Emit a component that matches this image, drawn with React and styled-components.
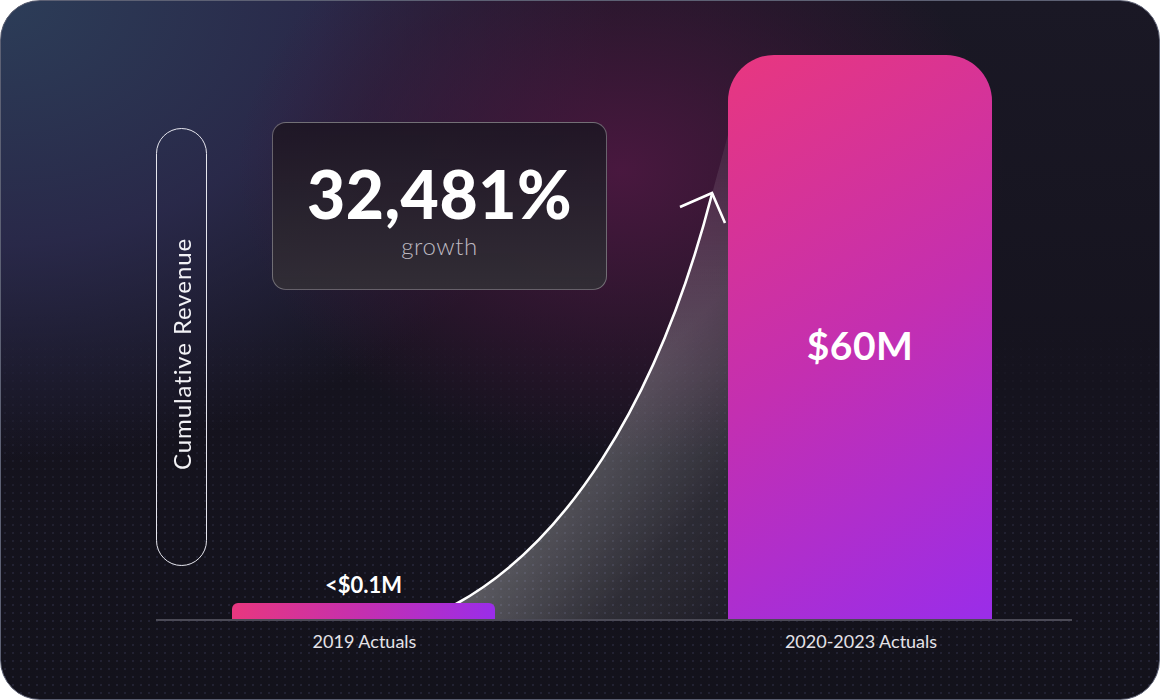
import React from "react";
import styled, { createGlobalStyle } from "styled-components";

const GlobalStyle = createGlobalStyle`
  html, body {
    margin: 0;
    padding: 0;
    background: #ffffff;
  }
  body {
    font-family: "Lato", "Noto Sans", sans-serif;
  }
`;

const Card = styled.div`
  position: relative;
  width: 1160px;
  height: 700px;
  box-sizing: border-box;
  border-radius: 40px;
  border: 1.5px solid #5d6174;
  overflow: hidden;
  padding: 54px 88px 0 155px;
  display: flex;
  flex-direction: column;
  background:
    radial-gradient(ellipse 480px 360px at 620px 170px, rgba(78, 24, 66, 0.9), rgba(60, 22, 55, 0.4) 55%, transparent 80%),
    radial-gradient(ellipse 720px 540px at 0px 0px, #2c3d58 0%, rgba(46, 46, 84, 0.78) 45%, transparent 85%),
    linear-gradient(180deg, #1a1825 0%, #15131e 55%, #13121b 100%);

  &::before {
    content: "";
    position: absolute;
    inset: 0;
    background-image: radial-gradient(circle, rgba(110, 115, 165, 0.17) 0.9px, transparent 1.5px);
    background-size: 8px 8px;
    -webkit-mask-image: linear-gradient(180deg, transparent 45%, #000 80%);
    mask-image: linear-gradient(180deg, transparent 45%, #000 80%);
    pointer-events: none;
  }
`;

const Overlay = styled.svg`
  position: absolute;
  top: 0;
  left: 0;
  pointer-events: none;
  z-index: 0;
`;

const Plot = styled.div`
  position: relative;
  z-index: 1;
  display: flex;
  height: 564px;
  border-bottom: 2px solid #4b4a56;
  width: 916px;
`;

const AxisPill = styled.div`
  align-self: flex-start;
  margin-top: 73px;
  width: 51px;
  height: 438px;
  box-sizing: border-box;
  border: 1.5px solid #e6e6ee;
  border-radius: 26px;
  display: flex;
  align-items: center;
  justify-content: center;
  writing-mode: vertical-rl;
  transform: rotate(180deg);
  color: #f2f2f6;
  font-size: 24px;
  letter-spacing: 0.9px;
  padding-bottom: 14px;
`;

const LeftCol = styled.div`
  margin-left: 25px;
  width: 375px;
  display: flex;
  flex-direction: column;
  justify-content: space-between;
`;

const GrowthBox = styled.div`
  margin-top: 67px;
  margin-left: 40px;
  width: 335px;
  height: 168px;
  box-sizing: border-box;
  border-radius: 14px;
  border: 1px solid rgba(255, 255, 255, 0.32);
  background: linear-gradient(180deg, rgba(30, 22, 36, 0.92) 0%, rgba(50, 46, 54, 0.95) 100%);
  display: flex;
  flex-direction: column;
  align-items: center;
  padding-top: 38px;
`;

const BigNumber = styled.div`
  color: #ffffff;
  font-size: 66px;
  font-weight: 900;
  line-height: 1;
  letter-spacing: 0.5px;
`;

const Caption = styled.div`
  color: #bdb9c1;
  font-size: 24px;
  font-weight: 300;
  margin-top: 4px;
  letter-spacing: 0.6px;
`;

const BarWrap = styled.div`
  width: ${(p) => p.$w}px;
  display: flex;
  flex-direction: column;
  align-items: center;
`;

const BarValue = styled.div`
  color: #ffffff;
  font-size: 22px;
  font-weight: 700;
  line-height: 1;
  margin-bottom: 7px;
`;

const Bar = styled.div`
  width: 100%;
  height: ${(p) => p.$h}px;
  border-radius: ${(p) => p.$r}px ${(p) => p.$r}px 0 0;
  background: linear-gradient(${(p) => p.$angle}, #e8377f 0%, #c42fb0 50%, #9a2de9 100%);
  display: flex;
  align-items: center;
  justify-content: center;
  box-sizing: border-box;
  padding-top: ${(p) => p.$pt || 0}px;
`;

const BigBar = styled(Bar)`
  margin-left: 121px;
  width: 264px;
  align-self: flex-end;
`;

const BigBarValue = styled.div`
  color: #ffffff;
  font-size: 39px;
  font-weight: 700;
  letter-spacing: 0.5px;
`;

const LabelRow = styled.div`
  position: relative;
  z-index: 1;
  display: flex;
  margin-top: 9px;
  padding-left: 77px;
`;

const XLabel = styled.div`
  width: ${(p) => p.$w}px;
  margin-left: ${(p) => p.$ml || 0}px;
  text-align: center;
  color: #e4e2e8;
  font-size: 18px;
  line-height: 22px;
`;

function GrowthCurve() {
  const curve = "M455 603 C 560 545, 655 410, 711 193";
  return (
    <Overlay width="1160" height="700" viewBox="0 0 1160 700">
      <defs>
        <linearGradient id="glow" x1="590" y1="430" x2="770" y2="600" gradientUnits="userSpaceOnUse">
          <stop offset="0" stopColor="#ffffff" stopOpacity="0.36" />
          <stop offset="0.55" stopColor="#ffffff" stopOpacity="0.12" />
          <stop offset="1" stopColor="#ffffff" stopOpacity="0.03" />
        </linearGradient>
        <linearGradient id="fade" x1="0" y1="619" x2="0" y2="130" gradientUnits="userSpaceOnUse">
          <stop offset="0" stopColor="#ffffff" stopOpacity="1" />
          <stop offset="0.5" stopColor="#ffffff" stopOpacity="0.7" />
          <stop offset="1" stopColor="#ffffff" stopOpacity="0.15" />
        </linearGradient>
        <mask id="fadeMask" maskUnits="userSpaceOnUse" x="0" y="0" width="1160" height="700">
          <rect x="0" y="0" width="1160" height="700" fill="url(#fade)" />
        </mask>
      </defs>
      <path d={`${curve} L 728 130 L 728 619 L 455 619 Z`} fill="url(#glow)" mask="url(#fadeMask)" />
      <path d={curve} fill="none" stroke="#ffffff" strokeWidth="2.6" strokeLinecap="round" />
      <path d="M679 206 L711 192 L724 222" fill="none" stroke="#ffffff" strokeWidth="2.6" />
    </Overlay>
  );
}

export default function App() {
  return (
    <>
      <GlobalStyle />
      <Card>
        <GrowthCurve />
        <Plot>
          <AxisPill>Cumulative Revenue</AxisPill>
          <LeftCol>
            <GrowthBox>
              <BigNumber>32,481%</BigNumber>
              <Caption>growth</Caption>
            </GrowthBox>
            <BarWrap $w={263}>
              <BarValue>&lt;$0.1M</BarValue>
              <Bar $h={16} $r={6} $angle="90deg" />
            </BarWrap>
          </LeftCol>
          <BigBar $h={564} $r={46} $pt={16} $angle="150deg">
            <BigBarValue>$60M</BigBarValue>
          </BigBar>
        </Plot>
        <LabelRow>
          <XLabel $w={263}>2019 Actuals</XLabel>
          <XLabel $w={264} $ml={233}>2020-2023 Actuals</XLabel>
        </LabelRow>
      </Card>
    </>
  );
}
